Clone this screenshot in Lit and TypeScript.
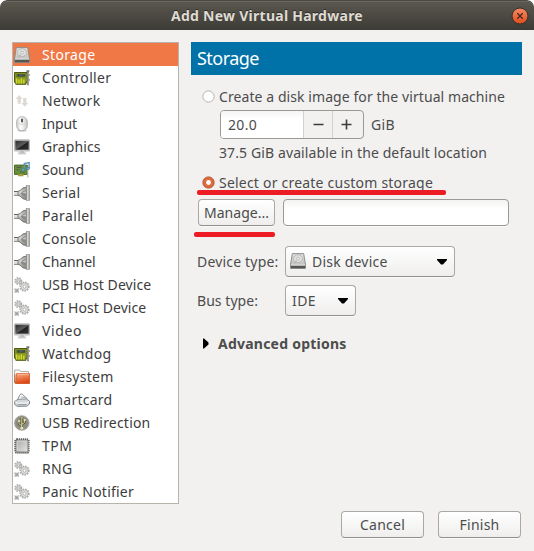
import { LitElement, html, svg, css, TemplateResult } from "lit";
import { customElement, property } from "lit/decorators.js";
import { classMap } from "lit/directives/class-map.js";

/* A label whose tracking is adjusted so that it fills a given width. */
@customElement("fit-text")
class FitText extends LitElement {
  static styles = css`
    :host { display: inline-block; white-space: pre; }
    .t { display: inline-block; }
  `;
  @property() text = "";
  @property({ type: Number }) width = 0;

  firstUpdated() {
    const el = this.renderRoot.querySelector(".t") as HTMLElement;
    const natural = el.getBoundingClientRect().width;
    const gap = (this.width - natural) / this.text.length;
    el.style.letterSpacing = gap.toFixed(3) + "px";
  }

  render() {
    return html`<span class="t">${this.text}</span>`;
  }
}

const gear = (x: number, y: number, r: number) => svg`
  <circle cx=${x} cy=${y} r=${r} fill="none" stroke="#adadab" stroke-width="1.6" stroke-dasharray="1.6 1"/>
  <circle cx=${x} cy=${y} r=${r - 0.8} fill="#e2e2e0" stroke="#a9a9a7" stroke-width=".7"/>
  <circle cx=${x} cy=${y} r=${r * 0.36} fill="#fff" stroke="#a2a2a0" stroke-width=".8"/>`;

const icons: Record<string, TemplateResult> = {
  disk: svg`
    <defs><linearGradient id="dk" x2="0" y2="1"><stop offset="0" stop-color="#e2e2e0"/><stop offset="1" stop-color="#b9bab7"/></linearGradient></defs>
    <path d="M2.3.6h11.4l1.8 11v3.8H.5v-3.8z" fill="url(#dk)" stroke="#858783" stroke-width=".9"/>
    <path d="M.9 12.6h14.2v2.6H.9z" fill="#555753"/>
    <path d="M1 12h14" stroke="#e6e6e4" stroke-width=".9"/>
    <ellipse cx="8" cy="5.6" rx="4.7" ry="3.9" fill="#dededc" stroke="#b0b1ae" stroke-width=".8"/>
    <ellipse cx="8" cy="5.6" rx="1.6" ry="1.2" fill="#eee" stroke="#a8a8a6" stroke-width=".6"/>
    <path d="M4 10.2l3-2.7" stroke="#a5a5a3" stroke-width=".8"/>`,
  card: svg`
    <path d="M.5 2.5h12.8v9.8H12v2H1.8v-2H.5z" fill="#8d9a22" stroke="#4c5813"/>
    <path d="M1.5 3.6h11v3.6h-11z" fill="#75821e"/>
    <path d="M3.5 4.2h7.3v2.4H3.5z" fill="#2f4146"/>
    <path d="M5 5.1h4.5" stroke="#6a8790" stroke-width=".7"/>
    <path d="M2.6 8.6v5M5 9.6v4M7.4 8.6v5M9.8 9.6v4" stroke="#d0dc33" stroke-width="1.4"/>
    <path d="M12.4 1.1h2.9M14 1v14.3" fill="none" stroke="#777a74" stroke-width="1.7"/>
    <path d="M14.2 2.5v12" stroke="#b9bbb6" stroke-width=".6"/>
    <path d="M15.5 4v2M15.5 9v2" stroke="#aaa" stroke-width="1"/>`,
  network: svg`
    <path d="M5.2 2L8.7 6H6.8v4.8H3.6V6H1.7z" fill="#dedad3"/>
    <path d="M10.8 13.8L7.3 9.9h1.9V5h3.2v4.9h1.9z" fill="#dedad3"/>`,
  mouse: svg`
    <defs><linearGradient id="ms"><stop offset="0" stop-color="#d3d4d1"/><stop offset=".4" stop-color="#fdfdfd"/><stop offset="1" stop-color="#c9cac7"/></linearGradient></defs>
    <ellipse cx="8" cy="14.5" rx="4.8" ry="1.2" fill="#cfcfcd"/>
    <rect x="2.7" y=".7" width="10.6" height="14" rx="5.1" fill="url(#ms)" stroke="#a9aba7" stroke-width=".9"/>
    <path d="M3 7.4q5 2.2 10 0" fill="none" stroke="#cfd0cd" stroke-width=".7"/>
    <rect x="7" y="2.4" width="2" height="4.2" rx="1" fill="#555753"/>`,
  screen: svg`
    <defs><linearGradient id="sc" x2="1" y2="1"><stop offset="0" stop-color="#2c2e2d"/><stop offset=".5" stop-color="#5c5e5d"/><stop offset=".55" stop-color="#242424"/><stop offset="1" stop-color="#333"/></linearGradient></defs>
    <rect x=".4" y=".8" width="15.2" height="11.2" rx=".6" fill="#d6d7d4" stroke="#a8aaa6" stroke-width=".8"/>
    <path d="M1.3 1.7h13.4v9H1.3z" fill="url(#sc)"/>
    <path d="M6 12.3h4v1.5H6z" fill="#b4b5b2"/>
    <path d="M4.5 13.7h7v1.4h-7z" fill="#d7d8d5" stroke="#a7a8a5" stroke-width=".4"/>`,
  sound: svg`
    <path d="M.5 3.1h12.8v9.3H.5z" fill="#66903a" stroke="#4a6b2a"/>
    <path d="M4 12h5.5v2.2H4z" fill="#a79a3a"/>
    <path d="M2.5 5.4h5M2.5 7.6h3" stroke="#5b5f4c" stroke-width="1.4"/>
    <path d="M6 9.2h5v1.6H6z" fill="#55793a"/>
    <path d="M13.8 5v10.5" stroke="#b3b5af" stroke-width="1.1"/>
    <path d="M10.3 7.5V1.6l4.8-1V6" fill="none" stroke="#5d93b8" stroke-width="1.4"/>
    <ellipse cx="9.2" cy="7.9" rx="1.7" ry="1.3" fill="#6fa4c9" stroke="#35688d" stroke-width=".5"/>
    <ellipse cx="14" cy="6.3" rx="1.7" ry="1.3" fill="#6fa4c9" stroke="#35688d" stroke-width=".5"/>`,
  plug: svg`
    <defs>
      <linearGradient id="pl"><stop offset="0" stop-color="#9a9c97"/><stop offset=".5" stop-color="#e6e6e4"/><stop offset="1" stop-color="#7c7e79"/></linearGradient>
      <linearGradient id="pb" x2="0" y2="1"><stop offset="0" stop-color="#8a8c87"/><stop offset=".4" stop-color="#d8d9d6"/><stop offset="1" stop-color="#7d7f7a"/></linearGradient>
    </defs>
    <path d="M0 6.5h5M0 10.2h5" stroke="#60625e" stroke-width="1"/>
    <path d="M0 8.4h5" stroke="#dcdcda" stroke-width="2.2"/>
    <path d="M4 6.2Q6.3 6 7.3 4.3 8.6 2.5 12.4 2v12.6q-3.8-.5-5.1-2.2-1-1.8-3.3-2z" fill="url(#pb)" stroke="#747671" stroke-width=".9"/>
    <path d="M6.6 8.4Q8.1 5.6 12 5v7q-3.9-.7-5.4-3.6z" fill="#898b86"/>
    <path d="M8.2 8q1.3-1.6 3.8-1.8v2.2z" fill="#c5c6c3"/>
    <rect x="12.3" y=".5" width="3.2" height="15" fill="url(#pl)" stroke="#8a8c87" stroke-width=".6"/>`,
  gears: svg`
    ${gear(4.3, 4, 3.2)}
    ${gear(10.5, 9.6, 4.4)}
    <path d="M.6 11.6h4.2v4H.6z" fill="#c3c3c1"/>
    <path d="M.6 11.6l4.2 4M4.8 11.6l-4.2 4" stroke="#9c9c9a" stroke-width=".8"/>
    <circle cx="2.7" cy="13.6" r=".9" fill="#9a9a98"/>`,
  folder: svg`
    <defs><linearGradient id="fo" x2=".3" y2="1"><stop offset="0" stop-color="#f8ad81"/><stop offset="1" stop-color="#dd4814"/></linearGradient></defs>
    <path d="M.6 14V1h5l1.1 1.5h7.8V14z" fill="#fbf6f2" stroke="#aaa6a0" stroke-width=".9"/>
    <path d="M.8 14V5.5" stroke="#cc4a1c" stroke-width=".8"/>
    <path d="M2.4 4.7h13.1v9.8H1.5z" fill="url(#fo)" stroke="#d2521f" stroke-width=".8"/>
    <path d="M3 5.6h11.8" stroke="#ffd0b3" stroke-width=".6"/>`,
  smartcard: svg`
    <path d="M3.6 7.6L6 2.6Q6.8 1.5 8.2 2.1L13.4 7" fill="#fafafa" stroke="#8c9399" stroke-width="1"/>
    <path d="M6.8 5l5.6.6" stroke="#a5abb0" stroke-width="1"/>
    <path d="M.6 9.4L4 7.3l8.3-.4 3.2 2.1v3l-2.6 2.2-9.7.2L.6 12.4z" fill="#d3d7da" stroke="#7a8187" stroke-width=".9"/>
    <path d="M1.2 9.8l2.6 1.4 9-.3 2.2-1.5" fill="none" stroke="#fafafa" stroke-width="1"/>
    <path d="M3.4 12.8l9-.2" stroke="#8f969b" stroke-width="1"/>`,
  usb: svg`
    <defs><radialGradient id="ub"><stop offset="0" stop-color="#8f8f80"/><stop offset=".75" stop-color="#8a8b83"/><stop offset="1" stop-color="#a2a39e"/></radialGradient></defs>
    <circle cx="7.8" cy="8" r="7.3" fill="url(#ub)" stroke="#9a9b96" stroke-width=".8"/>
    <path d="M7.8 3v9.8M7.8 10.8L5 8.8V6.5M7.8 9.3l2.9-2V5" fill="none" stroke="#3d3d2e" stroke-width="2.1"/>
    <path d="M7.8 3v9.8M7.8 10.8L5 8.8V6.5M7.8 9.3l2.9-2V5" fill="none" stroke="#e9e6a0" stroke-width="1"/>
    <path d="M7.8 1.1l1.6 2.7H6.2z" fill="#e9e6a0" stroke="#3d3d2e" stroke-width=".4"/>
    <circle cx="7.8" cy="13.2" r="1.4" fill="#e9e6a0"/>
    <circle cx="5" cy="6" r="1.1" fill="#e9e6a0"/>
    <path d="M9.8 4h1.9v1.9H9.8z" fill="#e9e6a0"/>`,
  chip: svg`
    <defs><linearGradient id="ch" x2="1" y2="1"><stop offset="0" stop-color="#a9aba7"/><stop offset="1" stop-color="#e6e6e4"/></linearGradient></defs>
    <rect x="1.2" y="1.2" width="13.6" height="13.6" rx="1.6" fill="none" stroke="#5a5c59" stroke-width="1.8" stroke-dasharray="1.2 .8"/>
    <rect x="2" y="2" width="12" height="12" rx="1" fill="url(#ch)" stroke="#70726e" stroke-width=".9"/>
    <path d="M3.1 12.7V3.1h9.6" fill="none" stroke="#e9e9e7" stroke-width=".7"/>`,
};

const icon = (name: string) => html`<svg class="icon" viewBox="0 0 16 16" aria-hidden="true">${icons[name]}</svg>`;

const devices: [string, string, number][] = [
  ["Storage", "disk", 53.5],
  ["Controller", "card", 69.5],
  ["Network", "network", 58.5],
  ["Input", "mouse", 35],
  ["Graphics", "screen", 58.5],
  ["Sound", "sound", 42],
  ["Serial", "plug", 38.5],
  ["Parallel", "plug", 51.5],
  ["Console", "plug", 54.5],
  ["Channel", "plug", 53.5],
  ["USB Host Device", "gears", 109.3],
  ["PCI Host Device", "gears", 104.3],
  ["Video", "screen", 40],
  ["Watchdog", "card", 69.5],
  ["Filesystem", "folder", 71.5],
  ["Smartcard", "smartcard", 70.5],
  ["USB Redirection", "usb", 108.5],
  ["TPM", "chip", 30.5],
  ["RNG", "gears", 30.5],
  ["Panic Notifier", "gears", 92],
];

const fit = (text: string, width: number) => html`<fit-text .text=${text} .width=${width}></fit-text>`;
const arrow = html`<svg class="arrow" viewBox="0 0 10 6"><path d="M0 0h10v1L6 5.5H4L0 1z"/></svg>`;

@customElement("app-root")
class AppRoot extends LitElement {
  static styles = css`
    :host {
      display: block;
      height: 551px;
      background: #fff;
      color: #4c4c4c;
      font: 14px/20px "Noto Sans", "Open Sans", sans-serif;
    }
    * { box-sizing: border-box; }
    .window {
      height: 551px;
      background: #f2f1f0;
      border-radius: 7px 7px 0 0;
      overflow: hidden;
      display: flex;
      flex-direction: column;
    }
    .titlebar {
      height: 30px;
      flex: none;
      display: grid;
      grid-template-columns: 28px 1fr 28px;
      align-items: center;
      background: linear-gradient(#5b584f, #3d3b36);
      border-top: 1px solid #4b4943;
      box-shadow: inset 0 1px #6b685f;
      color: #dfdbd2;
      font-weight: 700;
      text-shadow: 0 -1px #2c2b27;
      border-radius: 7px 7px 0 0;
    }
    .title { text-align: center; grid-column: 2; }
    .close { width: 18px; height: 18px; margin-left: 5px; display: block; }
    .body { display: flex; padding: 12px 12px 0; height: 474px; }
    .list {
      width: 167px;
      height: 462px;
      flex: none;
      border: 1px solid #b8b3ab;
      background: #fff;
    }
    .row {
      height: 23px;
      padding-left: 1px;
      display: flex;
      align-items: center;
      gap: 12px;
      color: #3c3c3c;
      line-height: 23px;
    }
    .row.selected { background: #f07746; color: #fff; }
    .icon { width: 16px; height: 16px; flex: none; display: block; }
    .panel { width: 331px; margin-left: 12px; }
    .header {
      height: 33px;
      background: #0072a8;
      color: #fff;
      font-size: 18px;
      line-height: 33px;
      padding-left: 6px;
    }
    .option { display: flex; align-items: center; height: 20px; padding-left: 11px; gap: 4px; }
    .first { margin-top: 12px; }
    .radio { width: 13px; height: 13px; flex: none; display: block; margin: -2px 0 0; }
    .size { display: flex; align-items: center; margin: 3px 0 0 29px; height: 29px; }
    .spin {
      width: 144px;
      height: 29px;
      display: grid;
      grid-template-columns: 1fr 29px 31px;
      border: 1px solid #9a9996;
      border-radius: 4px;
      background: #f2f1f0;
      overflow: hidden;
      margin-right: 7px;
    }
    .value { background: linear-gradient(#f4f4f3, #fff 8px); padding-left: 7px; line-height: 28px; }
    .step { border-left: 1px solid #d3d1cf; display: grid; place-items: center; }
    .step:last-child { padding-right: 3px; }
    .step svg { width: 11px; height: 11px; display: block; margin-top: -1px; }
    .note { padding-left: 28px; height: 20px; margin-top: 4px; }
    .second { margin-top: 10px; }
    .stroke { display: block; height: 5px; background: #ed1c24; border-radius: 2px; }
    .under-option { width: 249px; margin: -3px 0 4px 6px; position: relative; }
    .under-manage { width: 81px; margin: 6px 0 9px 3px; }
    .line { display: flex; align-items: center; }
    .path { padding-left: 7px; gap: 8px; height: 27px; }
    .button, .combo {
      border: 1px solid #aaa8a5;
      border-bottom-color: #92908d;
      border-radius: 4px;
      background: linear-gradient(#fff, #efeeed);
      box-shadow: 0 1px #f9f9f8;
    }
    .button { height: 27px; line-height: 26px; text-align: center; }
    .manage { width: 77px; }
    .entry {
      width: 226px;
      height: 27px;
      border: 1px solid #9a9996;
      border-radius: 4px;
      background: linear-gradient(#f3f3f2, #fff 9px);
      box-shadow: 0 1px #f9f9f8;
    }
    .field { height: 31px; padding-left: 6px; margin-bottom: 8px; }
    .label { width: 88px; flex: none; }
    .combo { height: 31px; display: flex; align-items: center; padding: 0 7px 0 5px; }
    .device { width: 170px; gap: 6px; }
    .device .icon { margin-left: -1px; margin-top: -1px; }
    .bus { width: 71px; padding-left: 6px; }
    .arrow { width: 10px; height: 6px; margin-left: auto; fill: #000; display: block; }
    .advanced { height: 20px; padding-left: 12px; gap: 9px; margin-top: 18px; font-weight: 700; }
    .expander { width: 6px; height: 11px; display: block; margin-top: -2px; }
    .actions { display: flex; justify-content: flex-end; gap: 14px; padding: 7px 13px 0 0; }
    .actions .button { width: 83px; }
  `;

  render() {
    return html`
      <div class="window">
        <div class="titlebar">
          <span class="title">${fit("Add New Virtual Hardware", 192)}</span>
          <svg class="close" viewBox="0 0 18 18">
            <defs><linearGradient id="cl" x2="0" y2="1"><stop offset="0" stop-color="#f68b66"/><stop offset="1" stop-color="#e04c1b"/></linearGradient></defs>
            <circle cx="9" cy="9" r="8" fill="url(#cl)" stroke="#34322d" stroke-width="1"/>
            <path d="M6.3 6.3l5.4 5.4M11.7 6.3l-5.4 5.4" stroke="#44291c" stroke-width="1.3"/>
          </svg>
        </div>
        <div class="body">
          <div class="list">
            ${devices.map(([name, glyph, width], i) => html`
              <div class=${classMap({ row: true, selected: i === 0 })}>${icon(glyph)}${fit(name, width)}</div>`)}
          </div>
          <div class="panel">
            <div class="header">${fit("Storage", 62)}</div>
            <div class="option first">
              <svg class="radio" viewBox="0 0 13 13"><circle cx="6.5" cy="6.5" r="5.6" fill="#fff" stroke="#b5b3b0"/></svg>
              ${fit("Create a disk image for the virtual machine", 286)}
            </div>
            <div class="size">
              <div class="spin">
                <span class="value">${fit("20.0", 29)}</span>
                <span class="step"><svg viewBox="0 0 11 11"><path d="M.5 5.5h10" stroke="#3c3c3c" stroke-width="1.6"/></svg></span>
                <span class="step"><svg viewBox="0 0 11 11"><path d="M.5 5.5h10M5.5.5v10" stroke="#3c3c3c" stroke-width="1.6"/></svg></span>
              </div>
              ${fit("GiB", 24)}
            </div>
            <div class="note">${fit("37.5 GiB available in the default location", 268)}</div>
            <div class="option second">
              <svg class="radio" viewBox="0 0 13 13"><circle cx="6.5" cy="6.5" r="5.6" fill="#dd6b3e" stroke="#b4502c"/><circle cx="6.5" cy="6.5" r="2.4" fill="#fff"/></svg>
              ${fit("Select or create custom storage", 214)}
            </div>
            <span class="stroke under-option"></span>
            <div class="line path">
              <div class="button manage">${fit("Manage...", 65)}</div>
              <div class="entry"></div>
            </div>
            <span class="stroke under-manage"></span>
            <div class="line field">
              <span class="label">${fit("Device type:", 81.5)}</span>
              <div class="combo device">${icon("disk")}${fit("Disk device", 75.5)}${arrow}</div>
            </div>
            <div class="line field">
              <span class="label">${fit("Bus type:", 61)}</span>
              <div class="combo bus">${fit("IDE", 24)}${arrow}</div>
            </div>
            <div class="line advanced">
              <svg class="expander" viewBox="0 0 6 11"><path d="M0 .5h1L5.5 4.5v2L1 10.5H0z"/></svg>
              ${fit("Advanced options", 128.5)}
            </div>
          </div>
        </div>
        <div class="actions">
          <div class="button">${fit("Cancel", 45)}</div>
          <div class="button">${fit("Finish", 40)}</div>
        </div>
      </div>
    `;
  }
}
